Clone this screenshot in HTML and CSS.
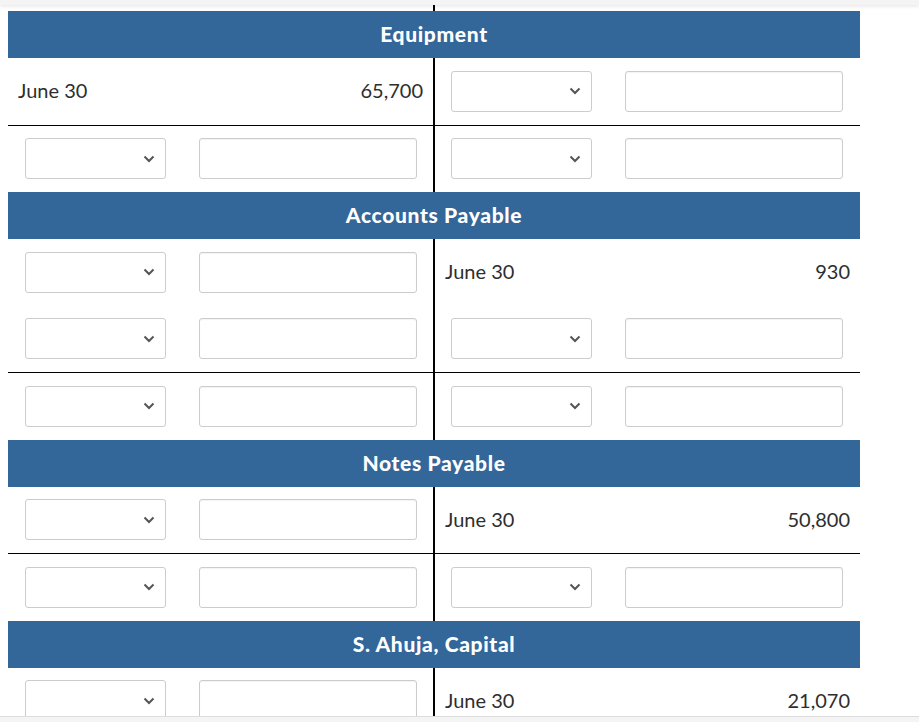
FILE: index.html
```html
<!DOCTYPE html>
<html lang="en">
<head>
<meta charset="utf-8">
<title>T-Accounts</title>
<link rel="stylesheet" href="styles.css">
</head>
<body>
<div class="topbar"></div>
<div class="ledger">
  <section class="account">
    <div class="acct-head">Equipment</div>
    <div class="row">
      <div class="cell text"><span>June 30</span><span>65,700</span></div>
      <div class="cell entry"><div class="sel"><svg viewBox="0 0 12 8" class="chev"><path d="M1.5 1.5 L6 6 L10.5 1.5"/></svg></div><div class="inp"></div></div>
    </div>
    <div class="row ruled thick">
      <div class="cell entry"><div class="sel"><svg viewBox="0 0 12 8" class="chev"><path d="M1.5 1.5 L6 6 L10.5 1.5"/></svg></div><div class="inp"></div></div>
      <div class="cell entry"><div class="sel"><svg viewBox="0 0 12 8" class="chev"><path d="M1.5 1.5 L6 6 L10.5 1.5"/></svg></div><div class="inp"></div></div>
    </div>
  </section>

  <section class="account">
    <div class="acct-head">Accounts Payable</div>
    <div class="row">
      <div class="cell entry"><div class="sel"><svg viewBox="0 0 12 8" class="chev"><path d="M1.5 1.5 L6 6 L10.5 1.5"/></svg></div><div class="inp"></div></div>
      <div class="cell text"><span>June 30</span><span>930</span></div>
    </div>
    <div class="row">
      <div class="cell entry"><div class="sel"><svg viewBox="0 0 12 8" class="chev"><path d="M1.5 1.5 L6 6 L10.5 1.5"/></svg></div><div class="inp"></div></div>
      <div class="cell entry"><div class="sel"><svg viewBox="0 0 12 8" class="chev"><path d="M1.5 1.5 L6 6 L10.5 1.5"/></svg></div><div class="inp"></div></div>
    </div>
    <div class="row ruled">
      <div class="cell entry"><div class="sel"><svg viewBox="0 0 12 8" class="chev"><path d="M1.5 1.5 L6 6 L10.5 1.5"/></svg></div><div class="inp"></div></div>
      <div class="cell entry"><div class="sel"><svg viewBox="0 0 12 8" class="chev"><path d="M1.5 1.5 L6 6 L10.5 1.5"/></svg></div><div class="inp"></div></div>
    </div>
  </section>

  <section class="account">
    <div class="acct-head">Notes Payable</div>
    <div class="row">
      <div class="cell entry"><div class="sel"><svg viewBox="0 0 12 8" class="chev"><path d="M1.5 1.5 L6 6 L10.5 1.5"/></svg></div><div class="inp"></div></div>
      <div class="cell text"><span>June 30</span><span>50,800</span></div>
    </div>
    <div class="row ruled">
      <div class="cell entry"><div class="sel"><svg viewBox="0 0 12 8" class="chev"><path d="M1.5 1.5 L6 6 L10.5 1.5"/></svg></div><div class="inp"></div></div>
      <div class="cell entry"><div class="sel"><svg viewBox="0 0 12 8" class="chev"><path d="M1.5 1.5 L6 6 L10.5 1.5"/></svg></div><div class="inp"></div></div>
    </div>
  </section>

  <section class="account">
    <div class="acct-head">S. Ahuja, Capital</div>
    <div class="row">
      <div class="cell entry"><div class="sel"><svg viewBox="0 0 12 8" class="chev"><path d="M1.5 1.5 L6 6 L10.5 1.5"/></svg></div><div class="inp"></div></div>
      <div class="cell text"><span>June 30</span><span>21,070</span></div>
    </div>
  </section>
</div>
<div class="bottombar"></div>
</body>
</html>
```
FILE: styles.css
```css
html, body {
  margin: 0;
  padding: 0;
  background: #ffffff;
}

body {
  font-family: Lato, "Open Sans", "Liberation Sans", sans-serif;
  color: #2e2e2e;
  overflow: hidden;
  height: 722px;
}

.topbar {
  position: relative;
  z-index: 2;
  height: 5px;
  background: #f4f4f4;
  box-shadow: 0 1px 4px rgba(0, 0, 0, 0.12);
}

.ledger {
  width: 852px;
  margin-left: 8px;
  padding-top: 6px;
  background: linear-gradient(to right,
    transparent 425px, #000 425px, #000 427px, transparent 427px);
}

.acct-head {
  height: 47px;
  line-height: 46px;
  background: #336699;
  color: #ffffff;
  text-align: center;
  font-weight: 900;
  font-size: 21px;
  letter-spacing: 0.65px;
}

.row {
  display: grid;
  grid-template-columns: 425px 425px;
  column-gap: 2px;
  height: 66.5px;
  box-sizing: border-box;
}

.row.ruled {
  border-top: 1px solid #000;
  height: 67.5px;
}

.row.thick {
  border-top-width: 1.5px;
}

.cell {
  display: flex;
  align-items: center;
}

.cell.text {
  justify-content: space-between;
  padding: 0 10px 2px;
  font-size: 20px;
}

.cell.entry {
  gap: 33px;
}

.row > .cell.entry:first-child {
  padding-left: 17px;
}

.row > .cell.entry:last-child {
  padding-left: 16px;
}

.sel {
  width: 141px;
  height: 41px;
  box-sizing: border-box;
  border: 1px solid #cccccc;
  border-radius: 3px;
  display: flex;
  align-items: center;
  justify-content: flex-end;
  padding-right: 10px;
  background: #fff;
}

.chev {
  width: 12px;
  height: 8px;
  fill: none;
  stroke: #555555;
  stroke-width: 2;
}

.inp {
  width: 218px;
  height: 41px;
  box-sizing: border-box;
  border: 1px solid #cccccc;
  border-radius: 3px;
  background: #fff;
  box-shadow: inset 0 1px 1px rgba(0, 0, 0, 0.05);
}

.bottombar {
  position: fixed;
  left: 0;
  right: 0;
  bottom: 0;
  height: 5px;
  background: #f4f4f4;
  border-top: 1px solid #dddddd;
}
```
